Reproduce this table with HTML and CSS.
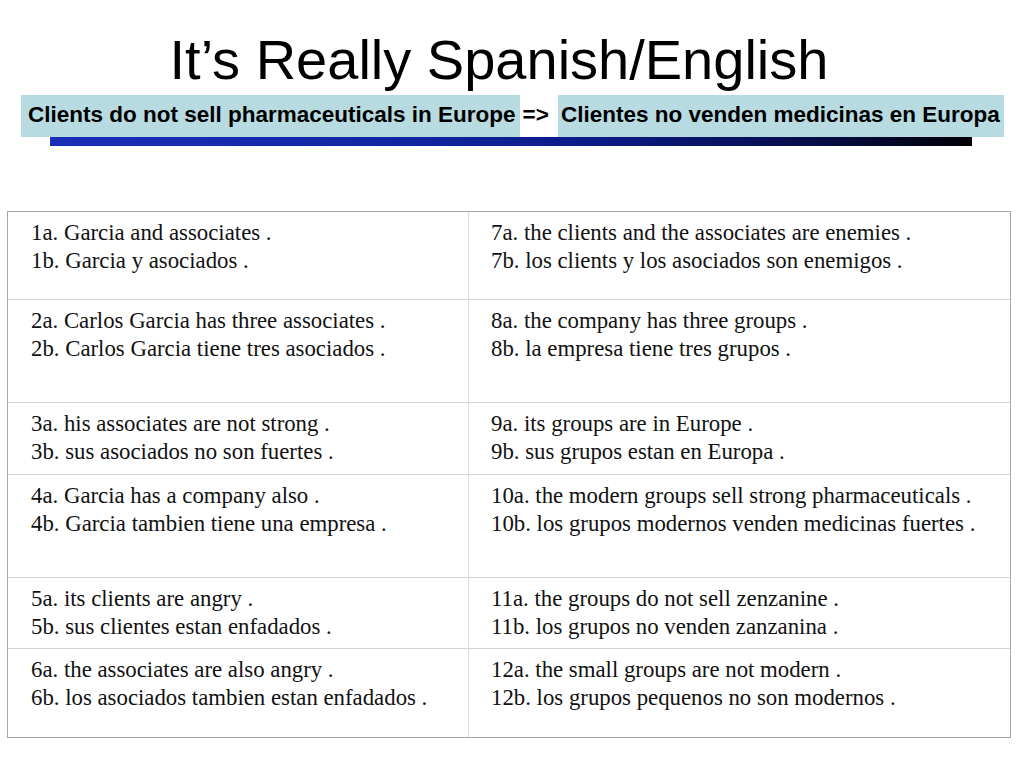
FILE: index.html
```html
<!DOCTYPE html>
<html lang="en">
<head>
<meta charset="utf-8">
<title>It’s Really Spanish/English</title>
<link rel="stylesheet" href="styles.css">
</head>
<body>
<div class="slide">
  <h1 class="title">It’s Really Spanish/English</h1>
  <div class="banner">
    <span class="hl hl-en">Clients do not sell pharmaceuticals in Europe</span>
    <span class="arrow">=&gt;</span>
    <span class="hl hl-es">Clientes no venden medicinas en Europa</span>
  </div>
  <div class="bar"></div>
  <div class="grid">
    <div class="cell c1 r1">1a. Garcia and associates .<br>1b. Garcia y asociados .</div>
    <div class="cell c2 r1">7a. the clients and the associates are enemies .<br>7b. los clients y los asociados son enemigos .</div>
    <div class="cell c1 r2">2a. Carlos Garcia has three associates .<br>2b. Carlos Garcia tiene tres asociados .</div>
    <div class="cell c2 r2">8a. the company has three groups .<br>8b. la empresa tiene tres grupos .</div>
    <div class="cell c1 r3">3a. his associates are not strong .<br>3b. sus asociados no son fuertes .</div>
    <div class="cell c2 r3">9a. its groups are in Europe .<br>9b. sus grupos estan en Europa .</div>
    <div class="cell c1 r4">4a. Garcia has a company also .<br>4b. Garcia tambien tiene una empresa .</div>
    <div class="cell c2 r4">10a. the modern groups sell strong pharmaceuticals .<br>10b. los grupos modernos venden medicinas fuertes .</div>
    <div class="cell c1 r5">5a. its clients are angry .<br>5b. sus clientes estan enfadados .</div>
    <div class="cell c2 r5">11a. the groups do not sell zenzanine .<br>11b. los grupos no venden zanzanina .</div>
    <div class="cell c1 r6 last">6a. the associates are also angry .<br>6b. los asociados tambien estan enfadados .</div>
    <div class="cell c2 r6 last">12a. the small groups are not modern .<br>12b. los grupos pequenos no son modernos .</div>
  </div>
</div>
</body>
</html>
```

FILE: styles.css
```css
* { box-sizing: border-box; }
html, body {
  margin: 0;
  padding: 0;
  background: #ffffff;
}
.slide {
  width: 1024px;
  height: 768px;
  overflow: hidden;
}
.title {
  margin: 28px 0 0 0;
  font-family: "Liberation Sans", Arial, sans-serif;
  font-weight: normal;
  font-size: 56px;
  line-height: 64px;
  text-align: center;
  color: #000;
  padding-right: 26px;
}
.banner {
  display: flex;
  align-items: stretch;
  margin: 3px 0 0 21px;
  height: 42px;
  font-family: "Liberation Sans", Arial, sans-serif;
  font-weight: bold;
  font-size: 22.5px;
  line-height: 39px;
  color: #000;
  white-space: nowrap;
}
.hl {
  background: #b7dbe0;
  padding-bottom: 3px;
}
.hl-en { padding: 0 4px 3px 7px; }
.hl-es { padding: 0 4px 3px 3px; }
.arrow {
  padding: 0 9px 3px 3px;
  background: #ffffff;
}
.bar {
  margin-left: 50px;
  width: 922px;
  height: 9px;
  background: linear-gradient(to right, #1a2fb8 0%, #1226a6 35%, #0c1a86 60%, #060c40 85%, #000005 100%);
}
.grid {
  margin: 65px 0 0 7px;
  width: 1004px;
  display: grid;
  grid-template-columns: 461px 1fr;
  grid-template-rows: 88px 103px 72px 103px 71px 88px;
  border: 1px solid #a6a6a6;
  background: #fff;
}
.cell {
  font-family: "Liberation Serif", "Times New Roman", serif;
  font-size: 22.8px;
  line-height: 28px;
  color: #111;
  padding-top: 7px;
  border-bottom: 1px solid #d4d4d4;
  white-space: nowrap;
}
.cell.last { border-bottom: none; }
.c1 {
  padding-left: 23px;
  border-right: 1px solid #dcdcdc;
}
.c2 { padding-left: 22px; }
```
